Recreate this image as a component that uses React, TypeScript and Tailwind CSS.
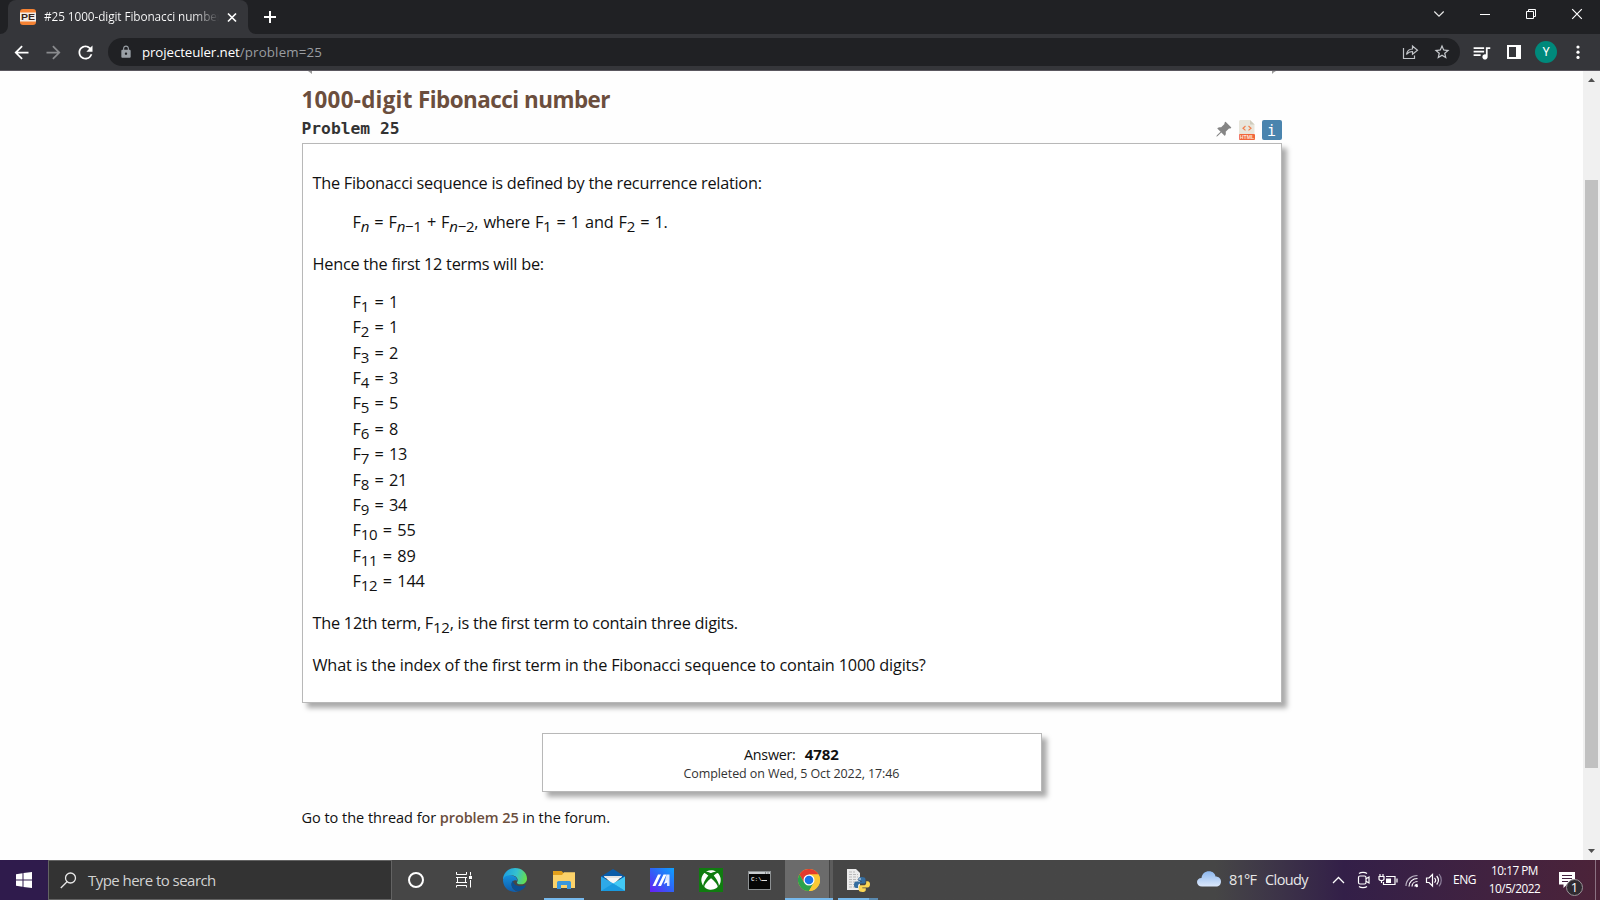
import type { ReactNode } from 'react';
import { MdArrowBack, MdArrowForward, MdRefresh, MdLock, MdStarBorder, MdQueueMusic } from 'react-icons/md';
import { BsPinAngleFill } from 'react-icons/bs';
import { FaXbox } from 'react-icons/fa';

const TERMS = [1, 1, 2, 3, 5, 8, 13, 21, 34, 55, 89, 144];

function Sub({ children }: { children: ReactNode }) {
  return <span className="align-[-4px] text-[15px] leading-[0]">{children}</span>;
}

function TabStrip() {
  return (
    <div className="flex h-[34px] shrink-0 items-stretch bg-[#202124]">
      <svg width="8" height="34" className="shrink-0">
        <path d="M8 26V34H0A8 8 0 0 0 8 26Z" fill="#35363a" />
      </svg>
      <div className="flex w-[240px] shrink-0 items-center rounded-t-[8px] bg-[#35363a] pl-[12px]">
        <svg width="16" height="16" viewBox="0 0 16 16" className="shrink-0">
          <rect width="16" height="16" rx="3" fill="#f58233" />
          <rect y="3.5" width="16" height="9" fill="#f3ece6" />
          <text x="8" y="11.400" textAnchor="middle" fontSize="9.500" fontWeight="900" textLength="14" lengthAdjust="spacingAndGlyphs" fontFamily="Liberation Sans, sans-serif" fill="#3b2418">PE</text>
        </svg>
        <div className="ml-[8px] w-[175px] overflow-hidden whitespace-nowrap bg-linear-to-r from-white from-85% to-transparent bg-clip-text text-[11.800px] tracking-[-0.090px] text-transparent">
          #25 1000-digit Fibonacci number
        </div>
        <svg width="16" height="16" viewBox="0 0 16 16" stroke="#fff" strokeWidth="1.7" className="ml-[5px] shrink-0">
          <path d="M4 4.5L12 12.5M12 4.5L4 12.5" />
        </svg>
      </div>
      <svg width="8" height="34" className="shrink-0">
        <path d="M0 26V34H8A8 8 0 0 1 0 26Z" fill="#35363a" />
      </svg>
      <svg width="28" height="34" stroke="#fff" strokeWidth="2" className="shrink-0">
        <path d="M8 17H20M14 11V23" />
      </svg>
      <div className="grow" />
      <svg width="184" height="34" fill="none" stroke="#fff" className="shrink-0">
        <path d="M18.300 11.500L23 16.200L27.700 11.500" stroke="#e8e8e8" strokeWidth="1.200" />
        <path d="M64 14.500H74" />
        <path d="M110.500 11.500H117.500V18.500H110.500ZM112.500 11.500V9.500H119.500V16.500H117.500" />
        <path d="M156.200 9.200L165.800 18.800M165.800 9.200L156.200 18.800" strokeWidth="1.200" />
      </svg>
    </div>
  );
}

function Toolbar() {
  return (
    <div className="flex h-[37px] shrink-0 items-center border-b border-[#5a575f] bg-[#35363a]">
      <MdArrowBack size={21} color="#fff" className="ml-[11px]" />
      <MdArrowForward size={21} color="#8a8b8e" className="ml-[11px]" />
      <MdRefresh size={21} color="#fff" className="ml-[11px]" />
      <div className="ml-[12px] flex h-[28px] w-[1352px] items-center rounded-full bg-[#202124] pr-[9px] pl-[11px]">
        <MdLock size={14} color="#9aa0a6" />
        <div className="ml-[9px] pt-[2px] text-[13.3px] tracking-[-0.1px] text-white">
          projecteuler.net<span className="tracking-[0.18px] text-[#9a9da1]">/problem=25</span>
        </div>
        <div className="grow" />
        <svg width="17" height="16" viewBox="0 0 17 16" fill="none" stroke="#c0c3c7" strokeWidth="1.200">
          <path d="M1.500 4V14.500H12.500V11.500" />
          <path d="M4.500 10.500C5 7 7 5 10.500 5V2L15.500 6.200L10.500 10.200V7.500C8 7.500 6 8.500 4.500 10.500Z" />
        </svg>
        <MdStarBorder size={18} color="#c7cace" className="ml-[14px]" />
      </div>
      <MdQueueMusic size={21} color="#fff" className="ml-[11px]" />
      <svg width="14" height="14" className="ml-[15px]">
        <path d="M0 0H14V14H0ZM2 2V12H9V2Z" fill="#fff" fillRule="evenodd" />
      </svg>
      <div className="ml-[14px] flex size-[22px] items-center justify-center rounded-full bg-[#00897b] text-[12px] text-white font-['Roboto',sans-serif]">Y</div>
      <svg width="6" height="14" fill="#fff" className="ml-[18px]">
        <circle cx="3" cy="2" r="1.600" />
        <circle cx="3" cy="7.200" r="1.600" />
        <circle cx="3" cy="12.400" r="1.600" />
      </svg>
    </div>
  );
}

function ProblemBox() {
  return (
    <div className="flex h-[560px] flex-col border border-[#b8b8b8] bg-white px-[10px] pt-[27px] text-[16.300px] leading-[24px] tracking-[-0.250px] whitespace-pre text-[#111] shadow-[5px_5px_5px_#aaa]">
      <p>The Fibonacci sequence is defined by the recurrence relation:</p>
      <p className="mt-[15px] pl-[40px] [word-spacing:1.200px]">
        F<Sub><i>n</i></Sub> = F<Sub><i>n</i>−1</Sub> + F<Sub><i>n</i>−2</Sub>, where F<Sub>1</Sub> = 1 and F<Sub>2</Sub> = 1.
      </p>
      <p className="mt-[18px]">Hence the first 12 terms will be:</p>
      <div className="mt-[14px] pl-[40px] leading-[25.360px] [word-spacing:1.500px]">
        {TERMS.map((value, i) => (
          <p key={i} className="h-[25.360px]">F<Sub>{i + 1}</Sub> = {value}</p>
        ))}
      </div>
      <p className="mt-[16.700px]">The 12th term, F<Sub>12</Sub>, is the first term to contain three digits.</p>
      <p className="mt-[18px] tracking-[-0.180px]">What is the index of the first term in the Fibonacci sequence to contain 1000 digits?</p>
    </div>
  );
}

function Page() {
  return (
    <div className="flex min-h-0 grow bg-[#fefefe]">
      <div className="flex grow justify-center overflow-hidden">
        <main className="flex w-[980px] flex-col">
          <div className="flex h-[4px] justify-between pr-[6px] pl-[6px]">
            <svg width="5" height="3"><path d="M0 0H4V3L2 1.500Z" fill="#999" /></svg>
            <svg width="5" height="3"><path d="M1 0H5L2.500 1.500L1 3Z" fill="#999" /></svg>
          </div>
          <h1 className="mt-[9px] h-[31px] text-[22.400px] leading-[32px] font-bold tracking-[-0.500px] text-[#6b4e3d]"><span className="tracking-[0.250px]">1000-digit</span> Fibonacci number</h1>
          <div className="flex h-[28px] items-start">
            <h3 className="mt-[3px] text-[16.300px] leading-[22px] font-bold text-[#333] font-['DejaVu_Sans_Mono',monospace]">Problem 25</h3>
            <div className="grow" />
            <BsPinAngleFill size={17} color="#858585" className="mt-[6px]" />
            <svg width="16" height="20" viewBox="0 0 16 20" className="mt-[5px] ml-[7px]">
              <path d="M1 0H11L15.500 4.500V14H0V1Z" fill="#e8e6dc" />
              <path d="M11 0L15.500 4.500H11Z" fill="#cfccbd" />
              <rect y="14" width="16" height="6" rx="1" fill="#f0673c" />
              <path d="M6.500 6L4 8.200L6.500 10.400M9.500 6L12 8.200L9.500 10.400" fill="none" stroke="#f0804f" strokeWidth="1.200" />
              <text x="8" y="19" textAnchor="middle" fontSize="5.200" fontWeight="700" fontFamily="Liberation Sans, sans-serif" fill="#ffe3d8">HTML</text>
            </svg>
            <div className="mt-[5px] ml-[7px] flex size-[20px] items-center justify-center rounded-[2px] bg-[#4a84ae] pt-[1px] text-[15px] leading-[20px] text-white font-['DejaVu_Sans_Mono',monospace]">i</div>
          </div>
          <ProblemBox />
          <div className="mt-[30px] h-[59px] w-[500px] self-center border border-[#b8b8b8] bg-white pt-[9px] text-center text-[#111] shadow-[5px_5px_5px_#aaa]">
            <p className="text-[14.300px] leading-[22px] tracking-[-0.250px]">Answer:<b className="ml-[9px] text-[15px] tracking-normal">4782</b></p>
            <p className="text-[12.500px] leading-[15px] tracking-[-0.090px] text-[#333]">Completed on Wed, 5 Oct 2022, 17:46</p>
          </div>
          <p className="mt-[15px] text-[14.500px] leading-[22px] tracking-[-0.020px] text-[#111]">
            Go to the thread for <span className="font-semibold tracking-[-0.100px] text-[#6b4e3d]">problem 25</span> in the forum.
          </p>
        </main>
      </div>
      <div className="flex w-[17px] shrink-0 flex-col items-center bg-[#f0f0f0]">
        <svg width="17" height="109"><path d="M5 11L8.500 7L12 11Z" fill="#505050" /></svg>
        <div className="h-[588px] w-[13px] shrink-0 bg-[#c1c1c1]" />
        <div className="grow" />
        <svg width="17" height="17" className="shrink-0"><path d="M5 6L8.500 10L12 6Z" fill="#505050" /></svg>
      </div>
    </div>
  );
}

function EdgeIcon() {
  return (
    <svg width="24" height="24" viewBox="0 0 24 24">
      <defs>
        <linearGradient id="edgeTop" x1="0" y1="0.300" x2="1" y2="0.500">
          <stop offset="0" stopColor="#1b9de0" /><stop offset=".55" stopColor="#35c1cf" /><stop offset="1" stopColor="#66e04b" />
        </linearGradient>
        <linearGradient id="edgeLow" x1="0" y1="0" x2="0" y2="1">
          <stop offset="0" stopColor="#1590dc" /><stop offset="1" stopColor="#0f5cab" />
        </linearGradient>
      </defs>
      <path d="M0 12C0 5 5.500 0 12 0C19 0 24 5 24 10.500C24 14 21.500 16.300 18 16.300C15 16.300 13.500 15.300 14 14.300C16 11.500 13.500 7.500 9 7.500C5 7.500 1 9.500 0 12Z" fill="url(#edgeTop)" />
      <path d="M0 12C1 8 5 6.800 9 7.500C12.500 8 14.500 10.500 14.300 13C13.500 11.500 8.500 12 8.500 16.500C8.500 20.500 12 23.500 15.500 23.500C14.500 23.800 13 24 12 24C5.500 24 0 19 0 12Z" fill="url(#edgeLow)" />
      <path d="M10 12.700C6.500 16 9.500 22.500 15.500 23.400C18.500 22.500 21.500 20.500 22.800 17.800C23 17.200 22.500 17 22 17.300C16 19.500 10.500 17.500 10 12.700Z" fill="#0c4f92" />
    </svg>
  );
}

function FolderIcon() {
  return (
    <svg width="22" height="18" viewBox="0 0 22 18">
      <path d="M0 0H8.500L10.500 2H22V6H0Z" fill="#e3a01b" />
      <path d="M0 4H9L11 1.200H22V17H0Z" fill="#fcd269" />
      <path d="M4 17V11.500Q4 10 5.500 10H16.500Q18 10 18 11.500V18H14V14H8V18H4Z" fill="#3a97dd" />
    </svg>
  );
}

function MailIcon() {
  return (
    <svg width="24" height="22" viewBox="0 0 24 22">
      <path d="M0 7.500L12 0L24 7.500V10H0Z" fill="#0a5ba8" />
      <path d="M3 7H21L12 16Z" fill="#f6f6f6" />
      <path d="M3 7H21L20 9H4Z" fill="#e3e3e3" />
      <path d="M0 7.500L12.500 14.500L24 22H0Z" fill="#2ea9e8" />
      <path d="M24 7.500L12 14.500L24 22Z" fill="#42c8f5" />
      <path d="M0 22L12 14.500L24 22Z" fill="#199ae0" />
    </svg>
  );
}

function AsusIcon() {
  return (
    <svg width="24" height="24" viewBox="0 0 24 24">
      <defs>
        <linearGradient id="asus" x1="0" y1="1" x2="1" y2="0">
          <stop offset="0" stopColor="#6a1cf5" /><stop offset=".5" stopColor="#2f62f7" /><stop offset="1" stopColor="#0ea2ff" />
        </linearGradient>
      </defs>
      <rect width="24" height="24" fill="url(#asus)" />
      <path d="M2.500 18L8 6.500H11L5.500 18ZM8 18L13.500 6.500H16.500L11 18Z" fill="#fff" />
      <path d="M16.500 6.500H19.500V18H17V14L14 16.500Z" fill="#dfe8ff" />
      <path d="M13.500 15.500L17.500 12V14.500Z" fill="#fff" />
    </svg>
  );
}

function CmdIcon() {
  return (
    <svg width="23" height="19" viewBox="0 0 23 19">
      <rect x=".5" y=".5" width="22" height="18" fill="#060606" stroke="#8d9193" />
      <rect x="1" y="1" width="21" height="2" fill="#c9cdd0" />
      <path d="M17 2H18M19.500 2H20.500" stroke="#444" />
      <text x="3" y="10" fontSize="6" fontWeight="700" fontFamily="Liberation Mono, monospace" fill="#ddd">C:\</text>
      <path d="M13.500 9.500H19" stroke="#ddd" />
    </svg>
  );
}

function ChromeIcon() {
  return (
    <svg width="22" height="22" viewBox="0 0 24 24">
      <circle cx="12" cy="12" r="12" fill="#fcc934" />
      <path d="M1.600 6A12 12 0 0 1 22.400 6H12L6.800 15Z" fill="#e33b2e" />
      <path d="M1.600 6A12 12 0 0 0 12 24L17.200 15L12 12L6.800 15Z" fill="#2ba24c" />
      <path d="M22.400 6A12 12 0 0 1 12 24L17.200 15L12 6Z" fill="#fcc934" />
      <circle cx="12" cy="12" r="6" fill="#fff" />
      <circle cx="12" cy="12" r="4.700" fill="#1a73e8" />
    </svg>
  );
}

function PythonIcon() {
  return (
    <svg width="24" height="24" viewBox="0 0 24 24">
      <path d="M1 1H10L14 5V22H1Z" fill="#ececec" />
      <path d="M3 4H9M3 6.500H12M3 9H12M3 11.500H12M3 14H12M3 16.500H12M3 19H12" stroke="#b9b9b9" strokeDasharray="3 1" />
      <path d="M15.500 9C12.500 9 12.300 10.300 12.300 11.500V13H16V13.500H10.500C8.500 13.500 8 15.200 8 17C8 18.800 8.700 20 10.500 20H12V18C12 16.500 13 15.500 14.500 15.500H18C19 15.500 19.500 14.800 19.500 14V11.500C19.500 9.700 18 9 15.500 9Z" fill="#356d9f" />
      <path d="M16.500 24C19.500 24 19.800 22.700 19.800 21.500V20.300H16.300V19.600H21.500C23.300 19.600 24 18 24 16.300C24 14.500 23.300 13.200 21.500 13.200H20.200V15C20.200 16.500 19 17.300 17.700 17.300H14.300C13 17.300 12.700 18 12.700 19V21.500C12.700 23.300 14.200 24 16.500 24Z" fill="#fbd654" />
      <circle cx="14" cy="11" r=".8" fill="#fff" />
    </svg>
  );
}

function TaskCell({ children, bar = false }: { children: ReactNode; bar?: boolean }) {
  return (
    <div className="flex h-full w-[49px] shrink-0 flex-col items-center">
      <div className="flex h-[38px] items-center justify-center pt-[2px]">{children}</div>
      {bar && <div className="h-[2px] w-[40px] bg-[#76b9ed]" />}
    </div>
  );
}

function Tray() {
  return (
    <svg width="120" height="40" fill="none" stroke="#fff" strokeWidth="1.200" className="shrink-0">
      <path d="M4 23L9.500 17.500L15 23" strokeWidth="1.300" />
      <rect x="29.500" y="16" width="7.500" height="8" rx="1.500" />
      <path d="M37 18.800L40 17V23L37 21.200M30 13.500C32 12 36 12 38 13.500M30 26.500C32 28 36 28 38 26.500" />
      <path d="M57 16.500H66V24.500H54.500V22M68 18.500V22.500" />
      <rect x="57" y="18.500" width="5" height="4.500" fill="#fff" stroke="none" />
      <path d="M50 16.500H55V19C55 21 50 21 50 19ZM51 14V16M54 14V16M52.500 20.500V23" />
      <path d="M77 26C77 20 82 15.500 88.500 15.500" stroke="#b7aebf" />
      <path d="M80 26.500C80 22 83.500 18.500 88.500 18.500M83 26.500C83 23.500 85.500 21.500 88.500 21.500M86 26.500C86 25 87 24.300 88.500 24.300" />
      <circle cx="87.800" cy="26" r="1.200" fill="#fff" stroke="none" />
      <path d="M97.500 18H100L103.500 14.500V26L100 22.500H97.500Z" />
      <path d="M105.500 17.800C106.800 19.200 106.800 21.300 105.500 22.700M107.700 16C109.800 18.500 109.800 22 107.700 24.500" />
      <path d="M110 14.200C113 17.500 113 23 110 26.300" stroke="#8d809b" />
    </svg>
  );
}

function Taskbar() {
  return (
    <div className="flex h-[40px] shrink-0 items-stretch bg-linear-to-r from-[#464646] from-76% via-[#331f48] via-84% to-[#4c2339]">
      <div className="flex w-[48px] shrink-0 items-center justify-center bg-[#2f1b4c]">
        <svg width="16" height="16" fill="#fff">
          <path d="M0 2.200L6.500 1.300V7.500H0ZM7.500 1.100L16 0V7.500H7.500ZM0 8.500H6.500V14.700L0 13.800ZM7.500 8.500H16V16L7.500 14.900Z" />
        </svg>
      </div>
      <div className="flex w-[344px] shrink-0 items-center border border-[#636363] bg-[#333333] pl-[11px]">
        <svg width="17" height="17" fill="none" stroke="#e8e8e8" strokeWidth="1.300">
          <circle cx="10.500" cy="6" r="5" />
          <path d="M7 9.700L.8 16" />
        </svg>
        <div className="ml-[11px] text-[15px] leading-[22px] tracking-[-0.540px] text-[#d2d2d2]">Type here to search</div>
      </div>
      <div className="flex w-[48px] shrink-0 items-center justify-center">
        <div className="size-[16px] rounded-full border-2 border-white" />
      </div>
      <div className="flex w-[50px] shrink-0 items-center pl-[16px]">
        <svg width="16" height="16" fill="none" stroke="#fff">
          <path d="M.5 0V2.500H10.500V0M.5 15.500V13.500H10.500V15.500M0 5.500H11M0 10.500H11M1.500 5.500V10.500M9.500 5.500V10.500M14.500 0V3.500M14.500 8V15.500" />
          <rect x="13" y="4" width="3" height="3" fill="#fff" stroke="none" />
        </svg>
      </div>
      <TaskCell><EdgeIcon /></TaskCell>
      <TaskCell bar><FolderIcon /></TaskCell>
      <TaskCell><MailIcon /></TaskCell>
      <TaskCell><AsusIcon /></TaskCell>
      <TaskCell>
        <div className="flex size-[24px] items-center justify-center bg-[#107c10]"><FaXbox size={20} color="#fff" /></div>
      </TaskCell>
      <TaskCell><CmdIcon /></TaskCell>
      <div className="ml-[1px] flex w-[48px] shrink-0 flex-col">
        <div className="flex h-[38px]">
          <div className="flex w-[44px] items-center justify-center bg-[#6b6b6b] pt-[2px] pl-[3px]"><ChromeIcon /></div>
          <div className="w-[4px] border-l border-[#444] bg-[#5c5c5c]" />
        </div>
        <div className="h-[2px] bg-[#76b9ed]" />
      </div>
      <div className="ml-[5px] flex w-[40px] shrink-0 flex-col">
        <div className="flex h-[38px] items-center pt-[2px] pl-[8px]"><PythonIcon /></div>
        <div className="flex h-[2px]"><div className="w-[31px] bg-[#76b9ed]" /><div className="grow bg-[#5a8ab0]" /></div>
      </div>
      <div className="grow" />
      <div className="flex w-[132px] shrink-0 items-center text-[14.500px] text-[#e8e8e8]">
        <svg width="24" height="16" viewBox="0 0 24 16" className="-mt-[2px]">
          <defs>
            <linearGradient id="cloud" x1="0" y1="0" x2="0" y2="1">
              <stop offset="0" stopColor="#8db8ee" /><stop offset="1" stopColor="#dce8fb" />
            </linearGradient>
          </defs>
          <path d="M5 15.500C2 15.500 0 13.500 0 11C0 8.700 1.800 7 4.500 7C5 3 8 .3 12 .3C15.500 .3 18 2.500 18.500 5.500C21.800 5.500 24 7.700 24 10.500C24 13.500 22 15.500 19 15.500Z" fill="url(#cloud)" />
        </svg>
        <div className="ml-[8px] tracking-[-0.800px]">81°F</div>
        <div className="ml-[9px] tracking-[-0.600px]">Cloudy</div>
      </div>
      <Tray />
      <div className="flex w-[38px] shrink-0 items-center pl-[4px] text-[12px] tracking-[-0.480px] text-white">ENG</div>
      <div className="flex w-[61px] shrink-0 flex-col items-center pt-[0.500px] pr-[6px] text-[11.800px] leading-[18px] tracking-[-0.500px] text-white">
        <div>10:17 PM</div>
        <div>10/5/2022</div>
      </div>
      <div className="relative flex w-[47px] shrink-0 items-center pl-[11px]">
        <svg width="16" height="17">
          <path d="M0 0H16V12.500H8L4.500 16V12.500H0Z" fill="#fff" />
          <path d="M3 3.500H13M3 6.500H13M3 9.500H9" stroke="#442240" />
        </svg>
        <div className="absolute top-[19px] left-[18px] flex size-[17px] items-center justify-center rounded-full border border-[#9b9399] bg-[#2f2a30] text-[13px] text-white">1</div>
      </div>
      <div className="w-[5px] shrink-0 border-l border-[#8b7182]" />
    </div>
  );
}

export default function App() {
  return (
    <div className="flex h-[900px] w-[1600px] flex-col overflow-hidden font-['Open_Sans','Noto_Sans',sans-serif]">
      <TabStrip />
      <Toolbar />
      <Page />
      <Taskbar />
    </div>
  );
}
